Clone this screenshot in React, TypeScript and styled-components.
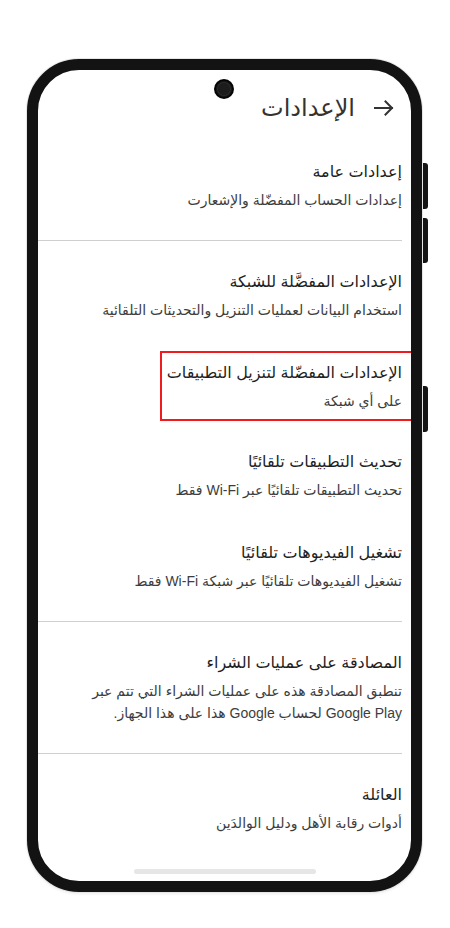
import styled, { createGlobalStyle } from "styled-components";

type Setting = {
  title: string;
  lines: string[];
  highlighted?: boolean;
};

const groups: Setting[][] = [
  [{ title: "إعدادات عامة", lines: ["إعدادات الحساب المفضّلة والإشعارت"] }],
  [
    {
      title: "الإعدادات المفضَّلة للشبكة",
      lines: ["استخدام البيانات لعمليات التنزيل والتحديثات التلقائية"],
    },
    {
      title: "الإعدادات المفضّلة لتنزيل التطبيقات",
      lines: ["على أي شبكة"],
      highlighted: true,
    },
    { title: "تحديث التطبيقات تلقائيًا", lines: ["تحديث التطبيقات تلقائيًا عبر Wi-Fi فقط"] },
    { title: "تشغيل الفيديوهات تلقائيًا", lines: ["تشغيل الفيديوهات تلقائيًا عبر شبكة Wi-Fi فقط"] },
  ],
  [
    {
      title: "المصادقة على عمليات الشراء",
      lines: [
        "تنطبق المصادقة هذه على عمليات الشراء التي تتم عبر",
        "Google Play لحساب Google هذا على هذا الجهاز.",
      ],
    },
  ],
  [{ title: "العائلة", lines: ["أدوات رقابة الأهل ودليل الوالدَين"] }],
];

export default function App() {
  return (
    <>
      <GlobalStyle />
      <Page>
        <Shell>
          <Frame>
            <Camera />
            <Screen dir='rtl'>
              <Header>
                <BackArrow viewBox='0 0 20 16' aria-hidden>
                  <path d='M1 8h17M11.5 1.5 18 8l-6.5 6.5' />
                </BackArrow>
                <PageTitle>الإعدادات</PageTitle>
              </Header>

              {groups.map((group, gi) => (
                <Group key={gi} $first={gi === 0}>
                  {group.map((item) => (
                    <Item key={item.title}>
                      <ItemText $highlighted={item.highlighted}>
                        <ItemTitle>{item.title}</ItemTitle>
                        {item.lines.map((line) => (
                          <ItemLine key={line}>{line}</ItemLine>
                        ))}
                      </ItemText>
                    </Item>
                  ))}
                </Group>
              ))}
            </Screen>
            <HomeBar />
          </Frame>

          <ButtonRail>
            <SideButton $height={46} />
            <SideButton $height={45} $gap={9} />
            <SideButton $height={46} $gap={123} />
          </ButtonRail>
        </Shell>
      </Page>
    </>
  );
}

/*
=========== STYLES =================
*/
const GlobalStyle = createGlobalStyle`
  html, body {
    margin: 0;
    background: #ffffff;
  }
  body {
    font-family: "Liberation Sans", "DejaVu Sans", sans-serif;
  }
`;

const Page = styled.div`
  width: 450px;
  height: 928px;
  padding: 59px 0 0 27px;
  box-sizing: border-box;
  overflow: hidden;
`;

const Shell = styled.div`
  display: flex;
  align-items: flex-start;
  height: 833px;
`;

const ButtonRail = styled.div`
  display: flex;
  flex-direction: column;
  padding: 104px 0 0 1px;
`;

const SideButton = styled.div<{ $height: number; $gap?: number }>`
  width: 5px;
  height: ${(p) => p.$height}px;
  margin-top: ${(p) => p.$gap ?? 0}px;
  background: #141414;
  border-radius: 0 3px 3px 0;
`;

const Frame = styled.div`
  position: relative;
  width: 395px;
  height: 100%;
  box-sizing: border-box;
  border: 11px solid #131313;
  border-radius: 52px;
  background: #ffffff;
  overflow: hidden;
  box-shadow: 0 0 0 1px #e6e6e6, 0 2px 3px rgba(0, 0, 0, 0.08);
`;

const Camera = styled.div`
  position: absolute;
  top: 9px;
  left: 176px;
  width: 20px;
  height: 20px;
  border-radius: 50%;
  background: radial-gradient(circle, #1c1c1c 0 40%, #2a2a2a 45%, #050505 60%);
  z-index: 2;
`;

const Screen = styled.div`
  height: 100%;
  padding-right: 9px;
  box-sizing: border-box;
`;

const Header = styled.div`
  display: flex;
  align-items: center;
  gap: 19px;
  height: 36px;
  padding: 20px 8px 14px 0;
`;

const BackArrow = styled.svg`
  width: 20px;
  height: 16px;
  fill: none;
  stroke: #333333;
  stroke-width: 2;
  stroke-linecap: square;
`;

const PageTitle = styled.h1`
  margin: 0;
  font-size: 24px;
  font-weight: 400;
  line-height: 36px;
  color: #333333;
`;

const Group = styled.div<{ $first: boolean }>`
  display: flex;
  flex-direction: column;
  ${(p) =>
    !p.$first &&
    `
    margin-top: 9px;
    padding-top: 9px;
    border-top: 1px solid #cfcfcf;
  `}
`;

const Item = styled.div`
  display: flex;
  padding: 19px 0 18px;
`;

const ItemText = styled.div<{ $highlighted?: boolean }>`
  display: flex;
  flex-direction: column;
  ${(p) =>
    p.$highlighted &&
    `
    margin: -9px -11px;
    padding: 7px 9px 5px 5px;
    border: 2px solid #ee1c1c;
  `}
`;

const ItemTitle = styled.div`
  font-size: 16px;
  line-height: 26px;
  margin-bottom: 3px;
  color: #1f1f1f;
`;

const ItemLine = styled.div`
  font-size: 14px;
  line-height: 25px;
  color: #3d3d3d;

  & + & {
    margin-top: -3px;
  }
`;

const HomeBar = styled.div`
  position: absolute;
  bottom: 7px;
  left: 50%;
  transform: translateX(-50%);
  width: 182px;
  height: 5px;
  border-radius: 3px;
  background: #e6e6e6;
`;
